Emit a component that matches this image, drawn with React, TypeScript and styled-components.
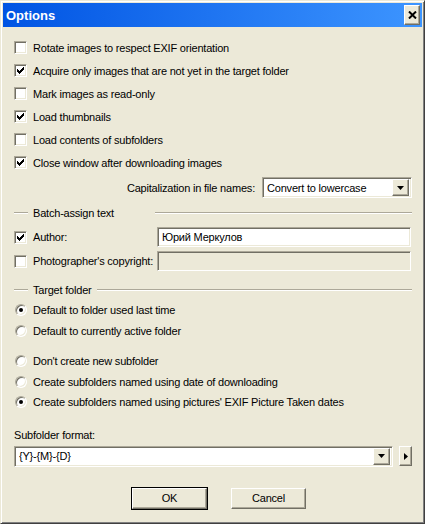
import React from "react";
import styled, { createGlobalStyle, css } from "styled-components";

const GlobalStyle = createGlobalStyle`
  html, body {
    margin: 0;
    padding: 0;
    background: #ece9d8;
  }
  body {
    font-family: "Liberation Sans", Arial, sans-serif;
    font-size: 11px;
    letter-spacing: -0.2px;
    color: #000;
  }
`;

const face = "#ece9d8";
const light = "#ffffff";
const shadow = "#aca899";
const dark = "#716f64";

const raised = css`
  background: ${face};
  border: 1px solid;
  border-color: ${light} ${dark} ${dark} ${light};
  box-shadow: inset -1px -1px 0 ${shadow};
`;

const sunken = css`
  border: 1px solid;
  border-color: ${shadow} ${light} ${light} ${shadow};
  box-shadow: inset 1px 1px 0 ${dark}, inset -1px -1px 0 ${face};
`;

const Window = styled.div`
  width: 425px;
  height: 524px;
  box-sizing: border-box;
  border: 1px solid;
  border-color: ${face} #404040 #404040 ${face};
  box-shadow: inset 1px 1px 0 ${light}, inset -1px -1px 0 #808080;
  padding: 2px;
  display: flex;
  flex-direction: column;
  background: ${face};
`;

const TitleBar = styled.div`
  height: 24px;
  background: linear-gradient(to right, #0054e3, #3d95ff);
  display: flex;
  align-items: center;
  justify-content: space-between;
  padding: 0 2px 0 3px;
`;

const Title = styled.span`
  color: #fff;
  font-weight: bold;
  font-size: 13px;
  letter-spacing: 0;
`;

const CloseButton = styled.button`
  ${raised};
  width: 16px;
  height: 20px;
  padding: 0;
  display: flex;
  align-items: center;
  justify-content: center;
`;

const Body = styled.div`
  flex: 1;
  display: flex;
  flex-direction: column;
  padding: 9px 10px 0 11px;
`;

const CheckList = styled.div`
  display: flex;
  flex-direction: column;
`;

const Row = styled.label<{ $h?: number }>`
  display: flex;
  align-items: center;
  gap: 6px;
  height: ${(p) => p.$h ?? 23}px;
  white-space: nowrap;
`;

const Box = styled.span`
  ${sunken};
  width: 13px;
  height: 13px;
  box-sizing: border-box;
  background: #fff;
  position: relative;
  flex: none;
`;

const CheckMark = styled.svg`
  position: absolute;
  left: 2px;
  top: 2px;
`;

const RadioDot = styled.span<{ $on?: boolean }>`
  ${sunken};
  width: 12px;
  height: 12px;
  box-sizing: border-box;
  border-radius: 50%;
  background: #fff;
  position: relative;
  flex: none;
  margin-left: 1px;
  &::after {
    content: "";
    display: ${(p) => (p.$on ? "block" : "none")};
    position: absolute;
    left: 3px;
    top: 3px;
    width: 4px;
    height: 4px;
    border-radius: 50%;
    background: #000;
  }
`;

const CapRow = styled.div`
  display: flex;
  align-items: center;
  justify-content: flex-end;
  gap: 7px;
  margin-top: 3px;
`;

const Select = styled.div<{ $w: number }>`
  ${sunken};
  width: ${(p) => p.$w}px;
  height: 21px;
  box-sizing: border-box;
  background: #fff;
  display: flex;
  align-items: center;
  padding: 2px 2px 2px 4px;
  gap: 4px;
`;

const SelectText = styled.span`
  flex: 1;
  white-space: nowrap;
  overflow: hidden;
`;

const DropButton = styled.span`
  ${raised};
  width: 17px;
  height: 17px;
  box-sizing: border-box;
  display: flex;
  align-items: center;
  justify-content: center;
  flex: none;
`;

const Group = styled.div<{ $mt: number }>`
  display: flex;
  align-items: center;
  height: 14px;
  margin-top: ${(p) => p.$mt}px;
`;

const GroupLine = styled.span<{ $w?: number }>`
  height: 0;
  border-top: 1px solid ${shadow};
  border-bottom: 1px solid ${light};
  ${(p) => (p.$w ? `width: ${p.$w}px; flex: none;` : "flex: 1;")}
`;

const GroupLabel = styled.span<{ $w?: number }>`
  padding: 0 5px;
  white-space: nowrap;
  ${(p) => (p.$w ? `width: ${p.$w}px; box-sizing: border-box;` : "")}
`;

const FieldGrid = styled.div`
  display: grid;
  grid-template-columns: 143px 254px;
  row-gap: 4px;
  margin-top: 7px;
  align-items: center;
`;

const TextField = styled.div<{ $disabled?: boolean }>`
  ${sunken};
  height: 20px;
  box-sizing: border-box;
  background: ${(p) => (p.$disabled ? face : "#fff")};
  display: flex;
  align-items: center;
  padding: 0 4px;
`;

const RadioList = styled.div<{ $mt: number }>`
  display: flex;
  flex-direction: column;
  margin-top: ${(p) => p.$mt}px;
`;

const PlainLabel = styled.div`
  margin-top: 15px;
  height: 14px;
  display: flex;
  align-items: center;
`;

const ComboRow = styled.div`
  display: flex;
  align-items: center;
  gap: 6px;
  margin-top: 4px;
`;

const MenuButton = styled.span`
  ${raised};
  width: 13px;
  height: 20px;
  box-sizing: border-box;
  display: flex;
  align-items: center;
  justify-content: center;
`;

const ButtonRow = styled.div`
  display: flex;
  gap: 24px;
  padding-left: 118px;
  margin-top: 21px;
`;

const PushButton = styled.button<{ $default?: boolean }>`
  ${raised};
  width: 75px;
  height: 21px;
  padding: 0;
  font-family: inherit;
  font-size: 11px;
  letter-spacing: inherit;
  color: #000;
  ${(p) =>
    p.$default &&
    css`
      outline: 1px solid #000;
      outline-offset: 0;
    `}
`;

const checkCols = [2, 3, 4, 3, 2, 1, 0];

const Check = () => (
  <CheckMark width="7" height="7" viewBox="0 0 7 7" shapeRendering="crispEdges">
    {checkCols.map((y, x) => (
      <rect key={x} x={x} y={y} width="1" height="3" fill="#000" />
    ))}
  </CheckMark>
);

const CheckRow = ({ text, on, h }: { text: string; on?: boolean; h?: number }) => (
  <Row $h={h}>
    <Box>{on && <Check />}</Box>
    {text}
  </Row>
);

const RadioRow = ({ text, on }: { text: string; on?: boolean }) => (
  <Row $h={20.5}>
    <RadioDot $on={on} />
    {text}
  </Row>
);

const DownArrow = () => (
  <svg width="7" height="4" viewBox="0 0 7 4">
    <polygon points="0,0 7,0 3.5,4" fill="#000" />
  </svg>
);

export default function App() {
  return (
    <>
      <GlobalStyle />
      <Window>
        <TitleBar>
          <Title>Options</Title>
          <CloseButton>
            <svg width="9" height="8" viewBox="0 0 9 8">
              <path d="M1 0.5 L8 7.5 M8 0.5 L1 7.5" stroke="#000" strokeWidth="2" />
            </svg>
          </CloseButton>
        </TitleBar>
        <Body>
          <CheckList>
            <CheckRow text="Rotate images to respect EXIF orientation" />
            <CheckRow text="Acquire only images that are not yet in the target folder" on />
            <CheckRow text="Mark images as read-only" />
            <CheckRow text="Load thumbnails" on />
            <CheckRow text="Load contents of subfolders" />
            <CheckRow text="Close window after downloading images" on />
          </CheckList>

          <CapRow>
            <span>Capitalization in file names:</span>
            <Select $w={150}>
              <SelectText>Convert to lowercase</SelectText>
              <DropButton>
                <DownArrow />
              </DropButton>
            </Select>
          </CapRow>

          <Group $mt={8}>
            <GroupLine $w={14} />
            <GroupLabel $w={127}>Batch-assign text</GroupLabel>
            <GroupLine />
          </Group>

          <FieldGrid>
            <CheckRow text="Author:" on h={20} />
            <TextField>Юрий Меркулов</TextField>
            <CheckRow text="Photographer's copyright:" h={20} />
            <TextField $disabled />
          </FieldGrid>

          <Group $mt={12}>
            <GroupLine $w={14} />
            <GroupLabel>Target folder</GroupLabel>
            <GroupLine />
          </Group>

          <RadioList $mt={3}>
            <RadioRow text="Default to folder used last time" on />
            <RadioRow text="Default to currently active folder" />
          </RadioList>

          <RadioList $mt={10}>
            <RadioRow text="Don't create new subfolder" />
            <RadioRow text="Create subfolders named using date of downloading" />
            <RadioRow text="Create subfolders named using pictures' EXIF Picture Taken dates" on />
          </RadioList>

          <PlainLabel>Subfolder format:</PlainLabel>

          <ComboRow>
            <Select $w={379}>
              <SelectText>{"{Y}-{M}-{D}"}</SelectText>
              <DropButton>
                <DownArrow />
              </DropButton>
            </Select>
            <MenuButton>
              <svg width="4" height="7" viewBox="0 0 4 7">
                <polygon points="0,0 4,3.5 0,7" fill="#000" />
              </svg>
            </MenuButton>
          </ComboRow>

          <ButtonRow>
            <PushButton $default>OK</PushButton>
            <PushButton>Cancel</PushButton>
          </ButtonRow>
        </Body>
      </Window>
    </>
  );
}
